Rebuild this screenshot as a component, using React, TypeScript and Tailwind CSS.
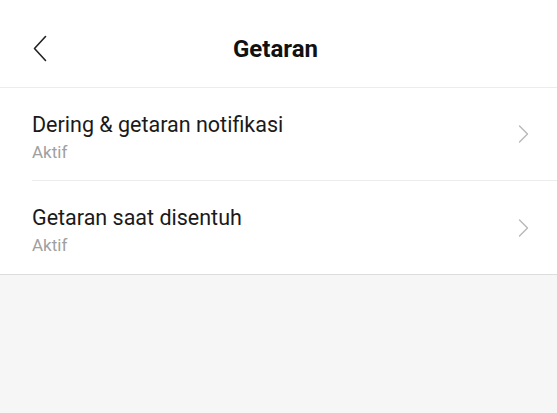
import React from "react";

function Chevron({ dir, className }: { dir: "left" | "right"; className?: string }) {
  return dir === "left" ? (
    <svg width="14" height="27" viewBox="0 0 14 27" className={className} fill="none">
      <path d="M12.5 1.5 L1.5 13.5 L12.5 25.5" stroke="#222" strokeWidth="1.6" strokeLinecap="round" strokeLinejoin="round" />
    </svg>
  ) : (
    <svg width="11" height="18" viewBox="0 0 11 18" className={className} fill="none">
      <path d="M1.5 1 L9.5 9 L1.5 17" stroke="#b8b8b8" strokeWidth="1.4" strokeLinecap="round" strokeLinejoin="round" />
    </svg>
  );
}

function Row({ title, sub, divider }: { title: string; sub: string; divider?: boolean }) {
  return (
    <div className="pl-[32px]">
      <div className={`flex h-[93px] items-center pr-[28px] ${divider ? "border-b border-[#ececec]" : ""}`}>
        <div className="flex flex-1 flex-col pt-[5px]">
          <span className="text-[21.5px] leading-[26px] text-[#1a1a1a]">{title}</span>
          <span className="mt-[4px] text-[17px] leading-[20px] text-[#a0a0a0]">{sub}</span>
        </div>
        <Chevron dir="right" />
      </div>
    </div>
  );
}

export default function App() {
  return (
    <div className="flex h-[413px] w-full flex-col bg-[#f6f6f6]" style={{ fontFamily: "Roboto, 'Noto Sans', sans-serif" }}>
      <div className="grid h-[88px] grid-cols-[1fr_auto_1fr] items-center border-b border-[#ececec] bg-white pt-[10px]">
        <div className="pl-[33px]">
          <Chevron dir="left" />
        </div>
        <div className="pr-[6px] text-[24px] font-bold leading-[28px] text-[#111]">Getaran</div>
        <div />
      </div>
      <div className="border-b border-[#dcdcdc] bg-white">
        <Row title="Dering & getaran notifikasi" sub="Aktif" divider />
        <Row title="Getaran saat disentuh" sub="Aktif" />
      </div>
    </div>
  );
}
